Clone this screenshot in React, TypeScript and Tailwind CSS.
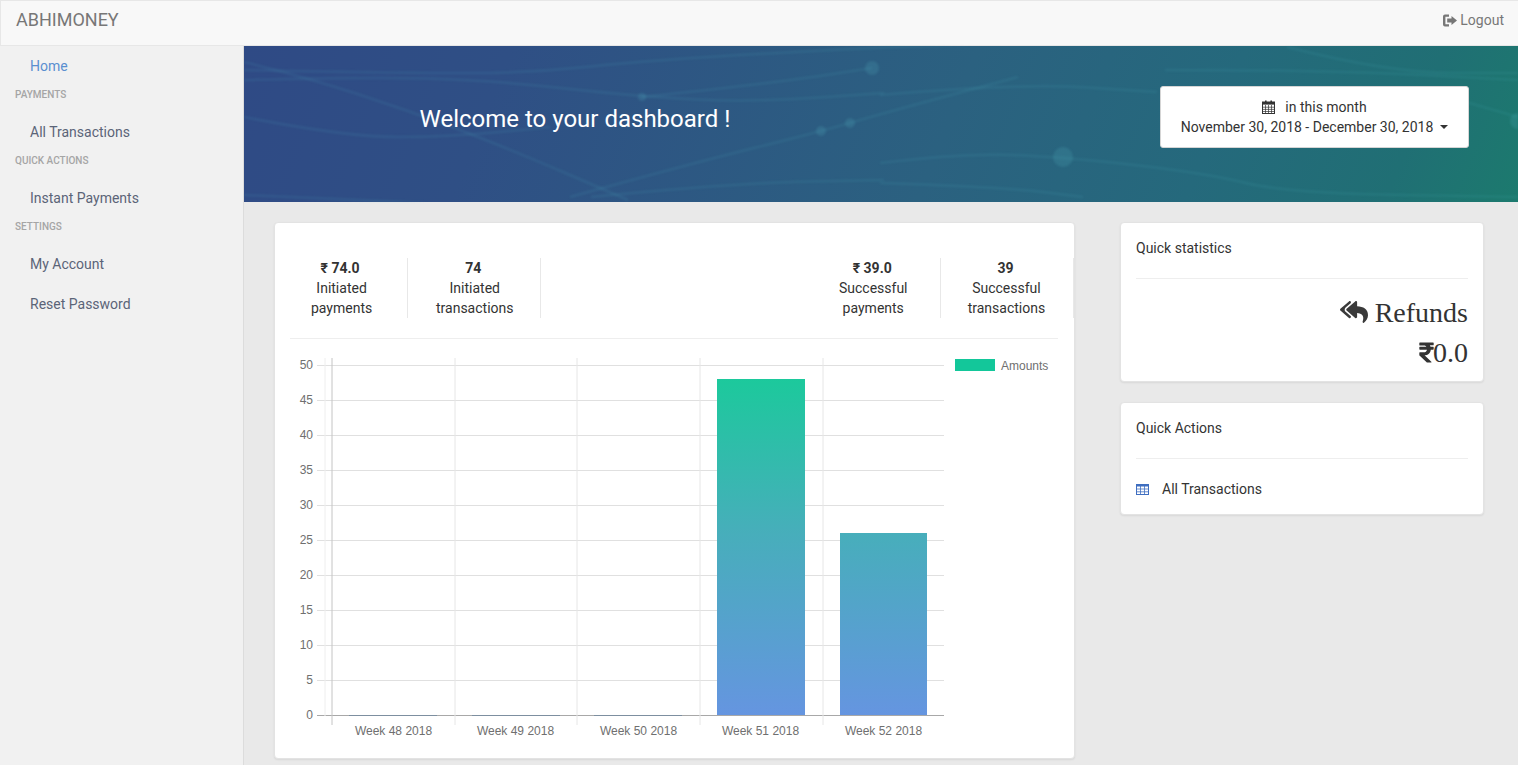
import { FaReplyAll, FaRupeeSign } from 'react-icons/fa'

const sideItems = [
  { type: 'link', label: 'Home', active: true },
  { type: 'head', label: 'Payments' },
  { type: 'link', label: 'All Transactions' },
  { type: 'head', label: 'Quick Actions' },
  { type: 'link', label: 'Instant Payments' },
  { type: 'head', label: 'Settings' },
  { type: 'link', label: 'My Account' },
  { type: 'link', label: 'Reset Password' }
]

const stats = [
  { value: '₹ 74.0', line1: 'Initiated', line2: 'payments' },
  { value: '74', line1: 'Initiated', line2: 'transactions' },
  null,
  null,
  { value: '₹ 39.0', line1: 'Successful', line2: 'payments' },
  { value: '39', line1: 'Successful', line2: 'transactions' }
]

// banner decoration, traced from the reference
const bannerCurves: number[][][] = [
  [[0, 16], [61, 31], [163, 64], [261, 101], [384, 154]],
  [[0, 24], [163, 27], [286, 27], [408, 14], [640, 1], [760, -2]],
  [[0, 34], [122, 31], [245, 34], [398, 51], [510, 56], [640, 47]],
  [[398, 51], [530, 37], [628, 22]],
  [[0, 71], [102, 91], [204, 91], [306, 81]],
  [[326, 151], [449, 117], [575, 86], [640, 67], [774, 31]],
  [[347, 151], [490, 137], [640, 134]],
  [[636, 49], [774, 37], [913, 46]],
  [[636, 117], [717, 107], [819, 111], [961, 127], [1043, 147], [1274, 151]],
  [[636, 137], [758, 141], [839, 151]],
  [[1043, 1], [1145, 27], [1274, 27]],
  [[921, 24], [1083, 24], [1274, 34]],
  [[1205, 51], [1274, 71]],
  [[0, 149], [122, 154], [200, 158]]
]

const bannerNodes = [
  { x: 628, y: 22, r: 7 },
  { x: 398, y: 51, r: 4 },
  { x: 577, y: 85, r: 5 },
  { x: 606, y: 77, r: 5 },
  { x: 819, y: 111, r: 10 },
  { x: 1274, y: 75, r: 8 }
]

// smooth line through the points, bending at each one towards the next midpoint
function curveThrough(points: number[][]) {
  let d = `M${points[0][0]} ${points[0][1]}`
  for (let i = 1; i < points.length - 1; i++) {
    const midX = (points[i][0] + points[i + 1][0]) / 2
    const midY = (points[i][1] + points[i + 1][1]) / 2
    d += ` Q${points[i][0]} ${points[i][1]} ${midX} ${midY}`
  }
  const last = points[points.length - 1]
  return `${d} L${last[0]} ${last[1]}`
}

function BannerLines() {
  return (
    <svg className="absolute inset-0 w-full h-full blur-[1px]" viewBox="0 0 1274 156" fill="none">
      <g stroke="#5cc0d0" strokeOpacity="0.1" strokeWidth="2.5">
        {bannerCurves.map((points, i) => (
          <path key={i} d={curveThrough(points)} />
        ))}
      </g>
      <g fill="#5cc0d0" fillOpacity="0.16">
        {bannerNodes.map((n) => (
          <circle key={n.x} cx={n.x} cy={n.y} r={n.r} />
        ))}
      </g>
    </svg>
  )
}

function CalendarIcon() {
  return (
    <svg width="13" height="14" viewBox="0 0 13 14" className="text-[#333]">
      <rect x="0.5" y="2" width="12" height="11.5" fill="none" stroke="currentColor" />
      <rect x="0.5" y="2" width="12" height="2.6" fill="currentColor" />
      <rect x="3" y="0.5" width="1.6" height="3" fill="currentColor" />
      <rect x="8.4" y="0.5" width="1.6" height="3" fill="currentColor" />
      <path d="M3.5 5V13M6.5 5V13M9.5 5V13M1 7.2H12M1 9.4H12M1 11.5H12" stroke="currentColor" strokeWidth="0.7" />
    </svg>
  )
}

function LogoutIcon() {
  return (
    <svg width="14" height="13" viewBox="0 0 14 13" fill="currentColor">
      <path d="M0 2.5A2 2 0 0 1 2 .5h4v2.2H2.4v7.6H6v2.2H2a2 2 0 0 1-2-2z" />
      <path d="M8.5 2 14 6.5 8.5 11V8.4H4.2V4.6h4.3z" />
    </svg>
  )
}

function TableIcon() {
  return (
    <svg width="13" height="11" viewBox="0 0 13 11" className="text-[#3f6ec0]" fill="none" stroke="currentColor">
      <rect x="0.5" y="0.5" width="12" height="10" />
      <path d="M0 1.5H13" strokeWidth="2" />
      <path d="M0 5H13M0 7.8H13M4.5 1V11M8.5 1V11" strokeWidth="0.8" />
    </svg>
  )
}

function BarChart() {
  const ticks = [50, 45, 40, 35, 30, 25, 20, 15, 10, 5, 0]
  const verticals = [455, 577, 700, 823]
  const labels = [
    { x: 393.5, text: 'Week 48 2018' },
    { x: 515.5, text: 'Week 49 2018' },
    { x: 638.5, text: 'Week 50 2018' },
    { x: 760.5, text: 'Week 51 2018' },
    { x: 883.5, text: 'Week 52 2018' }
  ]
  const chartFont = { fontFamily: '"Liberation Sans", Arial, sans-serif', fontSize: 12 }

  return (
    <svg width="769" height="400" viewBox="290 350 769 400" className="block">
      <defs>
        <linearGradient id="barFill" gradientUnits="userSpaceOnUse" x1="0" y1="379" x2="0" y2="715">
          <stop offset="0" stopColor="#1cc99c" />
          <stop offset="0.46" stopColor="#47aebb" />
          <stop offset="1" stopColor="#6595e0" />
        </linearGradient>
      </defs>
      {ticks.map((t) => {
        const y = 715 - t * 7 + 0.5
        return (
          <g key={t}>
            <line x1="317" x2="944" y1={y} y2={y} stroke={t === 0 ? '#a8a8a8' : '#e0e0e0'} />
            <text x="313" y={y + 3.5} textAnchor="end" fill="#6f6f6f" style={chartFont}>
              {t}
            </text>
          </g>
        )
      })}
      <line x1="325" x2="325" y1="358" y2="716" stroke="#eeeeee" />
      <line x1="332" x2="332" y1="358" y2="725" stroke="#c4c4c4" />
      {verticals.map((x) => (
        <line key={x} x1={x} x2={x} y1="358" y2="725" stroke="#e6e6e6" />
      ))}
      {[349, 472, 594].map((x) => (
        <line key={x} x1={x} x2={x + 88} y1="715.5" y2="715.5" stroke="#7d8fa0" />
      ))}
      <rect x="717" y="379" width="88" height="336" fill="url(#barFill)" />
      <rect x="840" y="533" width="87" height="182" fill="url(#barFill)" />
      {labels.map((l) => (
        <text key={l.text} x={l.x} y="735" textAnchor="middle" fill="#6f6f6f" style={chartFont}>
          {l.text}
        </text>
      ))}
      <rect x="955" y="359" width="40" height="12" fill="#13c79a" />
      <text x="1001" y="370" fill="#6f6f6f" style={chartFont}>
        Amounts
      </text>
    </svg>
  )
}

export default function App() {
  return (
    <div className="h-screen overflow-hidden flex flex-col bg-[#e9e9e9] text-[#333] text-[14px] leading-[20px] font-['Roboto',sans-serif]">
      {/* Navbar */}
      <div className="h-[46px] shrink-0 flex items-center justify-between pl-[15px] pr-[14px] pb-[6px] bg-[#f8f8f8] border border-[#e7e7e7] border-r-0 text-[#777]">
        <span className="text-[18px]">ABHIMONEY</span>
        <span className="flex items-center gap-[3px]">
          <LogoutIcon />
          Logout
        </span>
      </div>

      <div className="flex-1 flex min-h-0">
        {/* Sidebar */}
        <div className="w-[244px] shrink-0 bg-[#f1f1f1] border-r border-[#dcdcdc]">
          {sideItems.map((item) =>
            item.type === 'head' ? (
              <div key={item.label} className="h-[26px] pl-[15px] text-[10px] leading-[18px] font-medium uppercase text-[#a5a5a5]">
                {item.label}
              </div>
            ) : (
              <div
                key={item.label}
                className={`h-[40px] pl-[30px] flex items-center ${item.active ? 'text-[#5a8fd0]' : 'text-[#5b6478]'}`}
              >
                {item.label}
              </div>
            )
          )}
        </div>

        <div className="flex-1 min-w-0 flex flex-col">
          {/* Banner */}
          <div className="relative h-[156px] shrink-0 bg-[linear-gradient(112deg,#2f4a85_0%,#2f4f85_20%,#2b6180_55%,#25697c_75%,#206f74_90%,#1c7a6e_100%)]">
            <BannerLines />
            <div className="relative flex items-start justify-between pl-[175.5px] pr-[49px] pt-[40px]">
              <h1 className="text-[24px] leading-[26px] mt-[20px] font-normal text-white">Welcome to your dashboard !</h1>
              <div className="w-[309px] h-[62px] flex flex-col items-center justify-center bg-white rounded-[3px] border border-[#d5d5d5]">
                <div className="flex items-center gap-[10px]">
                  <CalendarIcon />
                  in this month
                </div>
                <div className="flex items-center">
                  November 30, 2018 - December 30, 2018
                  <span className="ml-[7px] border-x-[4px] border-x-transparent border-t-[4px] border-t-[#333]" />
                </div>
              </div>
            </div>
          </div>

          {/* Content */}
          <div className="flex-1 flex items-start gap-[45px] pl-[30px] pr-[34px] pt-[20px]">
            <div className="w-[801px] shrink-0 h-[537px] bg-white rounded-[4px] border border-[#e3e3e3] shadow-[0_1px_2px_rgba(0,0,0,0.08)]">
              <div className="grid grid-cols-6 pt-[35px]">
                {stats.map((s, i) =>
                  s ? (
                    <div key={i} className={`h-[60px] text-center border-r border-[#e8e8e8] ${i < 2 ? 'pl-[1px]' : 'pr-[1px]'}`}>
                      <div className={`font-bold ${i < 2 ? 'pr-[3px]' : 'pr-[2px]'}`}>{s.value}</div>
                      <div>{s.line1}</div>
                      <div>{s.line2}</div>
                    </div>
                  ) : (
                    <div key={i} />
                  )
                )}
              </div>
              <div className="ml-[15px] mr-[16px] mt-[20px] border-t border-[#eeeeee]" />
              <div className="pl-[15px] pt-[11px]">
                <BarChart />
              </div>
            </div>

            <div className="flex-1 min-w-0 flex flex-col gap-[20px]">
              <div className="h-[160px] bg-white rounded-[4px] border border-[#e3e3e3] shadow-[0_1px_2px_rgba(0,0,0,0.08)] px-[15px]">
                <div className="h-[56px] pt-[15px] border-b border-[#eeeeee]">Quick statistics</div>
                <div className="pt-[14px] text-[28px] leading-[40px] font-['Liberation_Serif',serif]">
                  <div className="flex items-center justify-end gap-[7px]">
                    <FaReplyAll size={28} className="text-[#3a3a3a] -mt-[3px]" />
                    Refunds
                  </div>
                  <div className="flex items-center justify-end">
                    <FaRupeeSign size={23} className="text-[#333] -mr-[5px] -mt-[2px]" />
                    0.0
                  </div>
                </div>
              </div>
              <div className="h-[113px] bg-white rounded-[4px] border border-[#e3e3e3] shadow-[0_1px_2px_rgba(0,0,0,0.08)] px-[15px]">
                <div className="h-[56px] pt-[15px] border-b border-[#eeeeee]">Quick Actions</div>
                <div className="flex items-center pt-[20px]">
                  <TableIcon />
                  <span className="ml-[13px]">All Transactions</span>
                </div>
              </div>
            </div>
          </div>
        </div>
      </div>
    </div>
  )
}
